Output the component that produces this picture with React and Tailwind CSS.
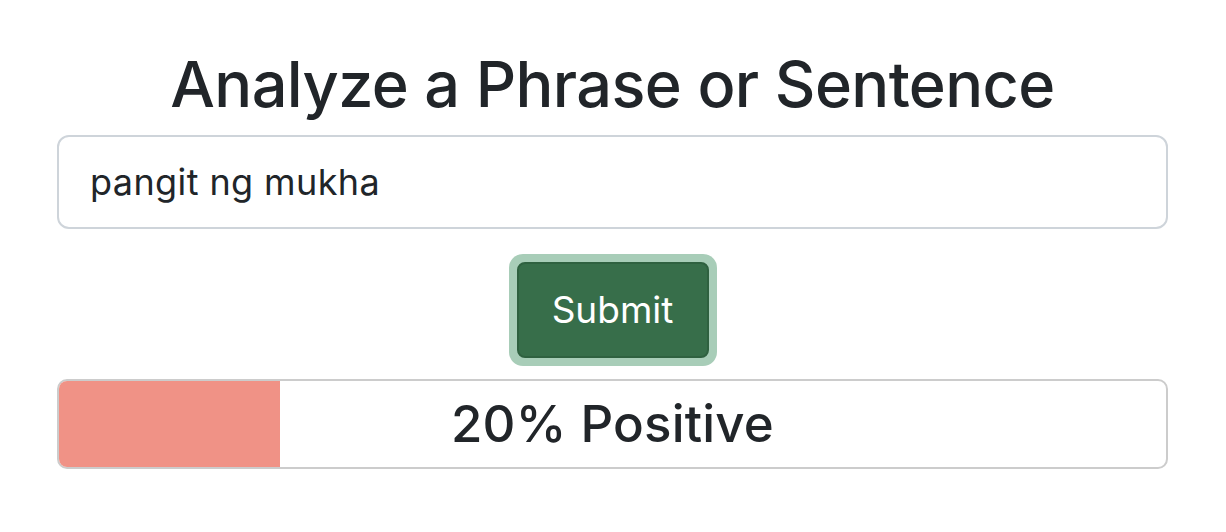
import React, { useState } from "react";

function App() {
  const [phrase, setPhrase] = useState("pangit ng mukha");
  const positive = 20;

  return (
    <div className="w-full bg-white font-['Inter',sans-serif] text-[#212529]">
      <div className="ml-[57px] w-[1111px] pt-[46px] flex flex-col items-center">
        <h1 className="text-[63px] leading-[76px] font-medium tracking-[-0.6px]">Analyze a Phrase or Sentence</h1>
        <input
          className="mt-[13px] w-full h-[94px] rounded-[12px] border-2 border-[#ced4da] px-[31px] text-[36px] tracking-[0.4px] text-[#212529] outline-none"
          value={phrase}
          onChange={(e) => setPhrase(e.target.value)}
        />
        <div className="mt-[25px] rounded-[14px] bg-[#a8cdb8] p-[8px]">
          <button className="w-[192px] h-[96px] rounded-[8px] border-2 border-[#2f6140] bg-[#376e4a] text-white text-[37px]">
            Submit
          </button>
        </div>
        <div className="mt-[13px] relative w-full h-[90px] rounded-[10px] border-2 border-[#cccccc] overflow-hidden">
          <div className="h-full bg-[#f09286]" style={{ width: positive + "%" }} />
          <div className="absolute inset-0 flex items-center justify-center text-[51px] font-medium tracking-[0.2px]">
            {positive}% Positive
          </div>
        </div>
      </div>
    </div>
  );
}

export default App;
